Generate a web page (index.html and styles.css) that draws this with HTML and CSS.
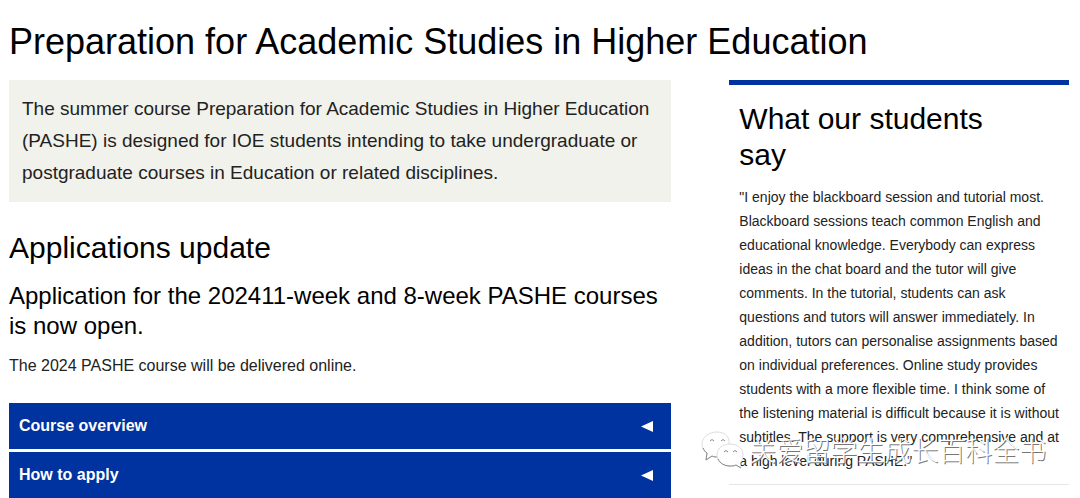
FILE: index.html
```html
<!DOCTYPE html>
<html lang="en">
  <head>
    <meta charset="UTF-8" />
    <meta name="viewport" content="width=device-width, initial-scale=1.0" />
    <title>Preparation for Academic Studies in Higher Education</title>
    <link rel="stylesheet" href="styles.css">
  </head>
  <body>
    <div class="page">
      <h1 class="page-title">Preparation for Academic Studies in Higher Education</h1>
      <div class="columns">
        <main class="content">
          <p class="intro">
            The summer course Preparation for Academic Studies in Higher Education
            (PASHE) is designed for IOE students intending to take undergraduate or
            postgraduate courses in Education or related disciplines.
          </p>
          <h2>Applications update</h2>
          <h3>Application for the 202411-week and 8-week PASHE courses is now open.</h3>
          <p class="note">The 2024 PASHE course will be delivered online.</p>
          <div class="accordion">
            <button type="button" class="accordion-item" aria-expanded="false">
              Course overview
              <svg class="arrow" viewBox="0 0 12 11" aria-hidden="true"><path d="M12 0v11L0 5.5z" /></svg>
            </button>
            <button type="button" class="accordion-item" aria-expanded="false">
              How to apply
              <svg class="arrow" viewBox="0 0 12 11" aria-hidden="true"><path d="M12 0v11L0 5.5z" /></svg>
            </button>
          </div>
        </main>
        <aside class="sidebar">
          <h2>What our students say</h2>
          <p class="quote">
            "I enjoy the blackboard session and tutorial most. Blackboard sessions
            teach common English and educational knowledge. Everybody can express
            ideas in the chat board and the tutor will give comments. In the
            tutorial, students can ask questions and tutors will answer
            immediately. In addition, tutors can personalise assignments based on
            individual preferences. Online study provides students with a more
            flexible time. I think some of the listening material is difficult
            because it is without subtitles. The support is very comprehensive and
            at a high level during PASHE."
          </p>
          <!-- account name over the end of the quote -->
          <div class="watermark">
            <svg class="wechat" viewBox="0 0 44 38" aria-hidden="true">
              <path class="bubble" d="M16 1C8 1 1 6 1 13c0 4 2 7 5 9l-1 7 6-4c2 1 4 1 7 1h10V13C29 6 24 1 16 1z" />
              <path class="shade" d="M2 17c1 2 2 4 4 5l-1 7 6-4c2 1 4 1 6 1" />
              <path class="bubble" d="M29 13c-8 0-13 5-13 11s5 11 13 11c2 0 4 0 6-1l5 3-1-5c2-2 3-5 3-8 0-6-5-11-13-11z" />
              <path class="shade" d="M17 28c2 4 6 7 12 7 2 0 4 0 6-1l5 3" />
              <path class="shade" d="M9 10q2-3 4 0M20 10q2-3 4 0M23 21q2-3 4 0M32 21q2-3 4 0" />
            </svg>
            <span lang="zh">关爱留学生成长百科全书</span>
          </div>
        </aside>
      </div>
    </div>
  </body>
</html>
```

FILE: styles.css
```css
:root {
  --blue: #0032a0;
  --beige: #f1f2eb;
}

* {
  box-sizing: border-box;
}

body {
  margin: 0;
  background-color: #fff;
  color: #222;
  font-family: "Liberation Sans", Arial, sans-serif;
}

.page {
  padding: 20px 11px 0 9px;
}

h1,
h2,
h3 {
  margin: 0;
  color: #000;
  font-weight: normal;
}

.page-title {
  font-size: 36px;
  line-height: 44px;
  margin-bottom: 16px;
}

.columns {
  display: grid;
  grid-template-columns: 1.95fr 1fr;
  column-gap: 58px;
  align-items: start;
}

h2 {
  font-size: 30px;
  line-height: 36px;
}

.intro {
  margin: 0 0 28px;
  padding: 13px;
  background-color: var(--beige);
  font-size: 19px;
  line-height: 32px;
}

h3 {
  margin-top: 15px;
  font-size: 24px;
  line-height: 30px;
}

.note {
  margin: 12px 0 24px;
  font-size: 16px;
  line-height: 26px;
}

.accordion {
  display: flex;
  flex-direction: column;
  gap: 3px;
}

.accordion-item {
  display: flex;
  justify-content: space-between;
  align-items: center;
  padding: 10px 18px 10px 10px;
  border: 0;
  background-color: var(--blue);
  color: #fff;
  font-family: inherit;
  font-size: 16px;
  font-weight: bold;
  line-height: 26px;
  cursor: pointer;
}

.arrow {
  width: 12px;
  height: 11px;
  fill: #fff;
}

.sidebar {
  position: relative;
  padding: 16px 8px 11px 10px;
  border-top: 5px solid var(--blue);
  border-bottom: 1px solid #e6e6e6;
}

.sidebar h2 {
  max-width: 280px;
}

.quote {
  margin: 12px 0 0;
  font-size: 14px;
  line-height: 24px;
}

.watermark {
  position: absolute;
  left: -28px;
  bottom: 14px;
  display: flex;
  align-items: center;
  gap: 4px;
  color: #fff;
  font-family: "Noto Sans CJK SC", sans-serif;
  font-size: 27px;
  font-weight: 300;
  line-height: 40px;
  white-space: nowrap;
  text-shadow: 1px 1px 0 #777;
}

.wechat {
  width: 44px;
  height: 38px;
}

.bubble {
  fill: #fff;
  stroke: #ddd;
}

.shade {
  fill: none;
  stroke: #888;
}
```
